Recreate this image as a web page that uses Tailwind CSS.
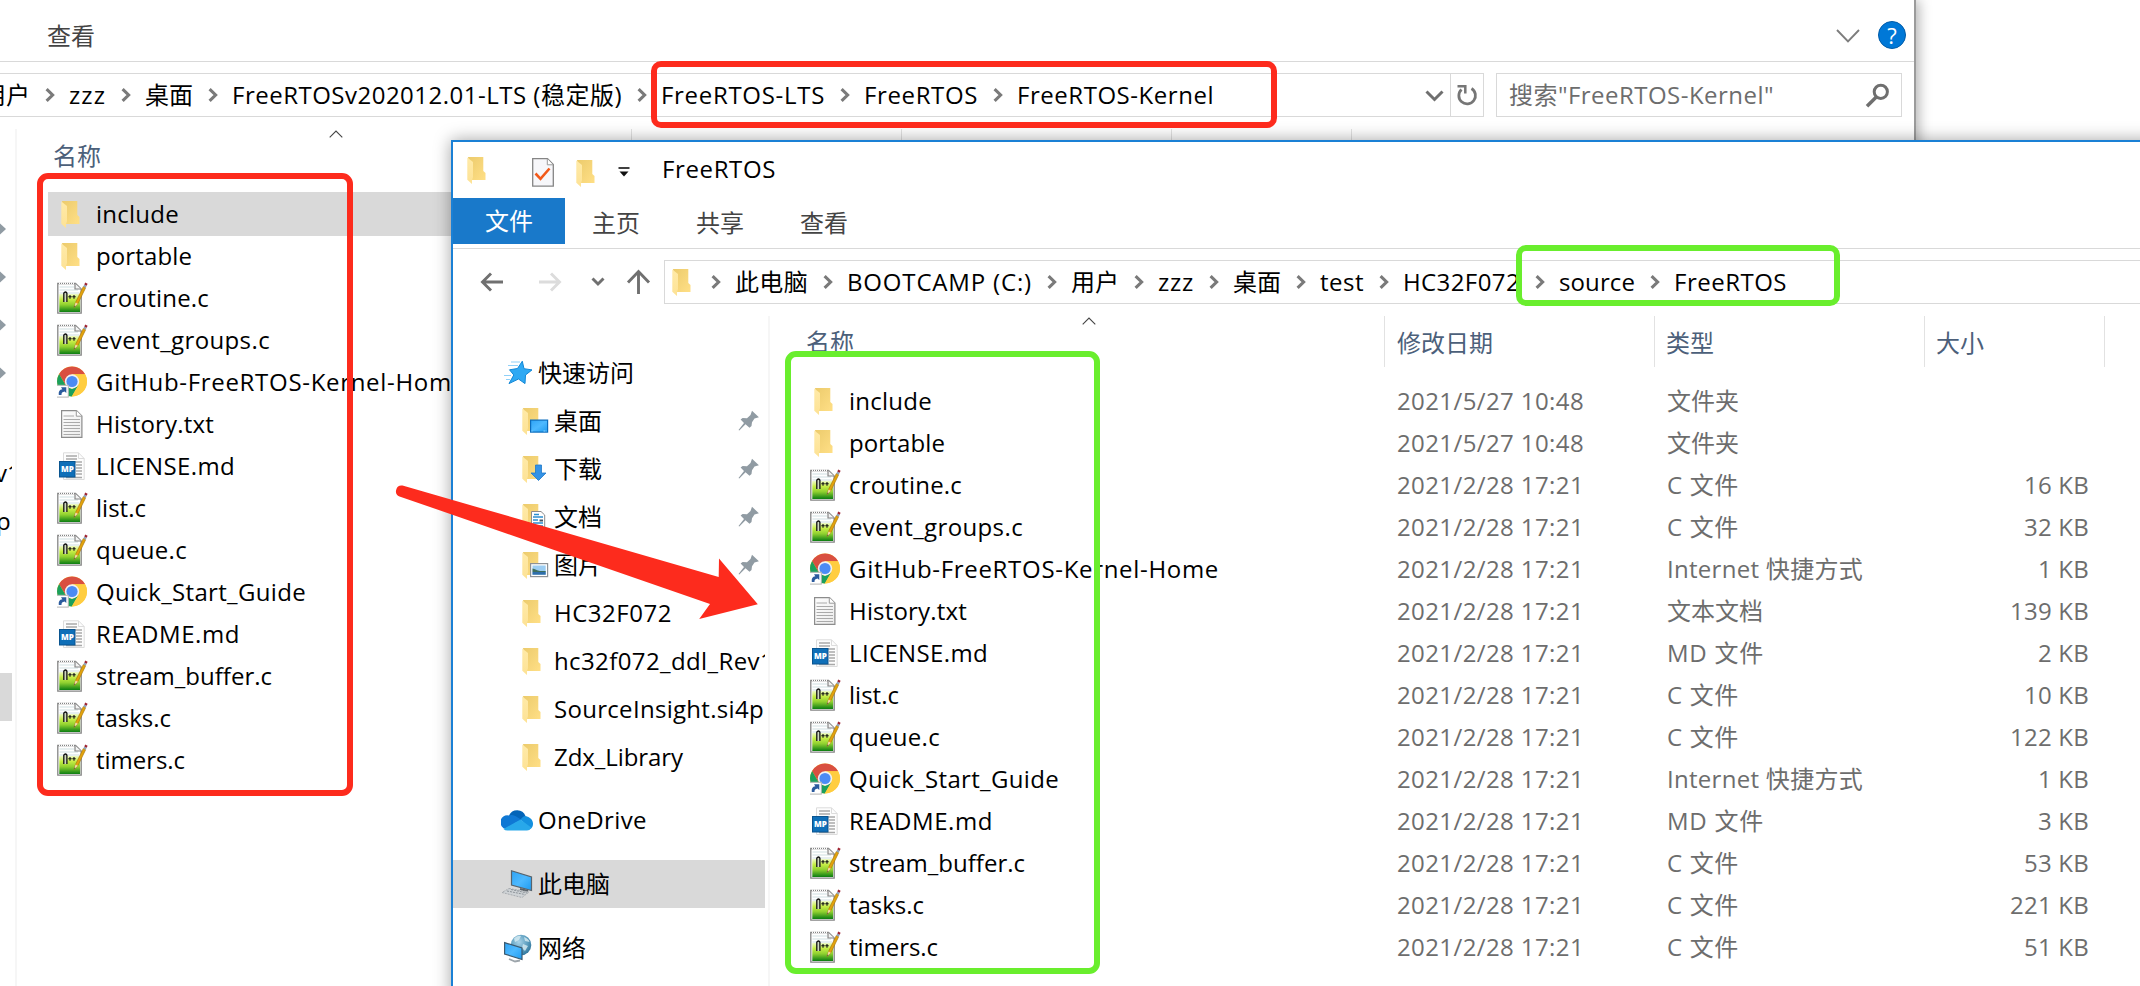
<!DOCTYPE html>
<html lang="zh-CN">
<head>
<meta charset="utf-8">
<title>FreeRTOS</title>
<script src="https://cdn.jsdelivr.net/npm/@tailwindcss/browser@4"></script>
</head>
<body class="relative h-[986px] w-[2140px] overflow-hidden bg-white font-['Open_Sans','Noto_Sans_CJK_SC',sans-serif] text-[24px] leading-[32px] text-black">

<!-- Icon library -->
<svg class="absolute h-0 w-0" aria-hidden="true">
  <defs>
    <linearGradient id="gFold" x1="0" x2="1" y1="0" y2="1"><stop offset="0" stop-color="#eccb6c"/><stop offset="1" stop-color="#ffdf86"/></linearGradient>
    <linearGradient id="gFlap" x1="0" x2="0" y1="0" y2="1"><stop offset="0" stop-color="#ffeaa8"/><stop offset="1" stop-color="#fde295"/></linearGradient>
    <linearGradient id="gNpp" x1="0" x2="0" y1="0" y2="1"><stop offset="0" stop-color="#eef9c8"/><stop offset=".3" stop-color="#c6ee45"/><stop offset=".6" stop-color="#8fd030"/><stop offset="1" stop-color="#0b7d12"/></linearGradient>
    <linearGradient id="gScr" x1="0" x2="1" y1="0" y2="1"><stop offset="0" stop-color="#2ea3f5"/><stop offset=".5" stop-color="#4db9ff"/><stop offset="1" stop-color="#1e9bf0"/></linearGradient>
    <linearGradient id="gPage" x1="0" x2="1" y1="0" y2="1"><stop offset="0" stop-color="#fdfdfd"/><stop offset="1" stop-color="#ececec"/></linearGradient>
    <radialGradient id="gGlobe" cx=".4" cy=".35" r=".7"><stop offset="0" stop-color="#a9d3e8"/><stop offset=".6" stop-color="#5c9ebf"/><stop offset="1" stop-color="#2f7399"/></radialGradient>
  </defs>
  <symbol id="folder" viewBox="0 -1 20 28">
    <path d="M1 0H16.300V14L18.500 16V23H5Z" fill="url(#gFold)"/>
    <path d="M.3 .5L6 5V20L5 23.500V27L.3 22.700Z" fill="url(#gFlap)"/>
  </symbol>
  <symbol id="npp" viewBox="0 0 31 32">
    <path d="M.8 1.500H18.500L24.200 7V31.200H.8Z" fill="#fff" stroke="#858585" stroke-width="1.300"/>
    <path d="M2 1.300H18" stroke="#fff" stroke-width="1.600" stroke-dasharray="1 1"/>
    <path d="M2.500 5H17M2.500 8H21M2.500 11H22" stroke="#cfdfe2" stroke-width="1.200"/>
    <rect x="2.300" y="12" width="20.800" height="18" fill="url(#gNpp)"/>
    <path d="M18 1.500V7H24" fill="#f3f3f3" stroke="#858585" stroke-width="1.200"/>
    <path d="M6.800 20V11.200Q8.300 8.800 9.900 11.200V20" fill="#cfd8c0" stroke="#111" stroke-width="1.300"/>
    <path d="M11.300 14.800H14.700M13 13V16.800M15.300 14.800H18.700M17 13V16.800" stroke="#111" stroke-width="1.100"/>
    <path d="M26.300 4.500L18.500 20.500L17 25.500L20.900 21.700L28.700 5.700Z" fill="#e2a30c" stroke="#a5720f" stroke-width=".6"/>
    <path d="M18.500 20.500L17 25.500L20.900 21.700Z" fill="#f0d9a8"/>
    <path d="M17.600 23.600L17 25.500L18.500 24Z" fill="#333"/>
    <path d="M26.300 4.500L27.300 2.600L29.700 3.700L28.700 5.700Z" fill="#8fa3b8"/>
    <path d="M27.300 2.600L28.200 .6L30.600 1.700L29.700 3.700Z" fill="#a02432"/>
  </symbol>
  <symbol id="chrome" viewBox="0 0 31 32">
    <circle cx="15" cy="15.500" r="15" fill="#ffcd40"/>
    <path d="M2.100 7.900A15 15 0 0 1 28 8L28.100 8.200H15L8.700 19.200Z" fill="#d94f41"/>
    <path d="M2.100 7.900L8.600 19.200L15 23L21.400 19L14.800 30.500A15 15 0 0 1 2.100 7.900Z" fill="#1ba05c"/>
    <path d="M15 8.200H28.100A15 15 0 0 1 14.800 30.500L21.400 19.200Z" fill="#ffcd40"/>
    <circle cx="15" cy="15.500" r="7.200" fill="#f1f1f1"/>
    <circle cx="15" cy="15.500" r="5.600" fill="#4b8bf4"/>
    <rect x="-.5" y="19.300" width="11.800" height="11.800" fill="#fff" stroke="#b5b5b5"/>
    <path d="M1.800 29C1.300 25.500 2.500 23.500 5.300 23.200L4 21.300H9.300V27L7.600 25.500C5.300 25.800 4.300 27 4.500 29Z" fill="#2b5b9e"/>
  </symbol>
  <symbol id="txt" viewBox="0 0 31 32">
    <path d="M4.600 2.600H19.500L24.900 8V29.400H4.600Z" fill="url(#gPage)" stroke="#8c8c8c" stroke-width="1.200"/>
    <path d="M19.300 2.600V8.200H24.900" fill="#fff" stroke="#9a9a9a"/>
    <path d="M6.500 8H17M6.500 11.500H23M6.500 14.500H23M6.500 17.500H23M6.500 20.500H23M6.500 23.500H23M6.500 26.500H23" stroke="#aaa"/>
  </symbol>
  <symbol id="md" viewBox="0 0 31 32">
    <path d="M6.500 2.800H21.500L27.200 8.500V29.500H6.500Z" fill="#fdfdfd" stroke="#dcdcdc"/>
    <path d="M21.500 2.800V8.500H27.200" fill="none" stroke="#dcdcdc"/>
    <path d="M9 6H20M9 9H20M12 12H25M19 15H25M19 18H25M19 21H25M19 24H25M9 27.500H25" stroke="#a9a9a9" stroke-width="1.300"/>
    <rect x="2.500" y="11.500" width="15.500" height="15.500" fill="#0f6fb8" stroke="#0a5590"/>
    <text x="10.300" y="22.300" text-anchor="middle" font-family="Open Sans, sans-serif" font-size="8" font-weight="800" letter-spacing="0" fill="#fff">MP</text>
  </symbol>
  <symbol id="chev" viewBox="0 0 10 14"><path d="M1.600 1.200L7.600 7L1.600 12.800" fill="none" stroke="#7a7a7a" stroke-width="3.100"/></symbol>
  <symbol id="sort" viewBox="0 0 14 8"><path d="M.7 7.300L7 1L13.300 7.300" fill="none" stroke="#444" stroke-width="1.100"/></symbol>
  <symbol id="pin" viewBox="0 0 22 22"><path d="M14 .8L20.900 7.200L16.500 8.500L14 12.300L13.500 16L11.500 17.800L7.500 14.200L1.300 20.500L.5 20L6 13L2.600 9.600L4.600 8L9 8.200L12.500 5Z" fill="#909ba3"/></symbol>
</svg>

<!-- Rear explorer window -->
<section class="absolute left-0 top-0 flex h-[986px] w-[1916px] flex-col border-r-2 border-[#9b9b9b] bg-white shadow-[3px_0_12px_rgba(0,0,0,0.3)]">
  <div class="flex h-[62px] shrink-0 items-center border-b border-[#d9d9d9] pl-[47px] pr-[8px] pt-[11px] text-[#444]">
    <span class="-mt-[1px]">查看</span>
    <svg class="ml-auto h-[14px] w-[24px]" viewBox="0 0 24 14"><path d="M1 1L12 12.300L23 1" fill="none" stroke="#7d7d7d" stroke-width="1.900"/></svg>
    <span class="-mt-[2px] ml-[18px] flex h-[28px] w-[28px] items-center justify-center rounded-full border border-[#005ba8] bg-[#0078d7] text-[22px] leading-[24px] text-white">?</span>
  </div>
  <div class="mt-[11px] flex h-[44px] shrink-0 items-stretch">
    <div class="flex w-[1484px] shrink-0 items-center border-y border-r border-[#d9d9d9]">
      <div id="crumbsA" class="-ml-[18px] flex items-center whitespace-nowrap"></div>
      <svg class="ml-auto mr-[6px] mt-[1px] h-[12px] w-[19px]" viewBox="0 0 19 12"><path d="M1.500 1.500L9.500 9.500L17.500 1.500" fill="none" stroke="#6f6f6f" stroke-width="3"/></svg>
      <div class="flex w-[33px] items-center justify-center self-stretch border-l border-[#d9d9d9]">
        <svg class="h-[23px] w-[22px]" viewBox="0 0 22 23"><path d="M15.500 4.500A8.300 8.300 0 1 1 5.500 5.500" fill="none" stroke="#767676" stroke-width="2.800"/><path d="M1.500 2.200H9.300V9.500" fill="none" stroke="#767676" stroke-width="2.500"/></svg>
      </div>
    </div>
    <div class="ml-[12px] flex w-[406px] items-center border border-[#d9d9d9] pl-[12px] pr-[11px] text-[#6d6d6d]">
      <span data-w="265" class="whitespace-nowrap">搜索"FreeRTOS-Kernel"</span>
      <svg class="ml-auto h-[25px] w-[25px]" viewBox="0 0 25 25"><circle cx="15.800" cy="8.800" r="6.600" fill="none" stroke="#6f6f6f" stroke-width="3"/><path d="M11.300 14L2 23.300" stroke="#6f6f6f" stroke-width="3.500"/></svg>
    </div>
  </div>
  <div class="flex grow pt-[12px]">
    <!-- Clipped end of the navigation column -->
    <div class="flex h-[857px] w-[12px] flex-col overflow-hidden pt-[76px]">
      <div class="flex h-[48px] shrink-0 items-end pb-[11px]"><svg class="h-[22px] w-[6px] shrink-0" viewBox="0 0 6 22"><path d="M0 3.500L6 9L0 14.500Z" fill="#909ba3"/></svg></div>
      <div class="flex h-[48px] shrink-0 items-end pb-[11px]"><svg class="h-[22px] w-[6px] shrink-0" viewBox="0 0 6 22"><path d="M0 3.500L6 9L0 14.500Z" fill="#909ba3"/></svg></div>
      <div class="flex h-[48px] shrink-0 items-end pb-[11px]"><svg class="h-[22px] w-[6px] shrink-0" viewBox="0 0 6 22"><path d="M0 3.500L6 9L0 14.500Z" fill="#909ba3"/></svg></div>
      <div class="flex h-[48px] shrink-0 items-end pb-[11px]"><svg class="h-[22px] w-[6px] shrink-0" viewBox="0 0 6 22"><path d="M0 3.500L6 9L0 14.500Z" fill="#909ba3"/></svg></div>
      <div class="h-[52px] shrink-0"></div>
      <div class="flex h-[48px] shrink-0 items-center"><span class="-ml-[5px]">v1</span></div>
      <div class="flex h-[48px] shrink-0 items-center"><span class="-ml-[4px]">pr</span></div>
      <div class="mt-[128px] h-[48px] shrink-0 bg-[#d9d9d9]"></div>
    </div>
    <div class="ml-[3px] w-[2px] bg-[#f6f6f6]"></div>
    <div class="flex w-[435px] flex-col">
      <div class="relative h-[63px] pl-[36px] pt-[11px] text-[#4c607a]">名称
        <svg class="absolute left-[312px] top-[1px] h-[8px] w-[14px]"><use href="#sort"/></svg>
      </div>
      <div id="filesA" class="ml-[31px] flex flex-col"></div>
    </div>
    <div class="ml-[179px] flex h-[51px]">
      <div class="w-[270px] border-l border-[#e2e2e2]"></div>
      <div class="w-[270px] border-l border-[#e2e2e2]"></div>
      <div class="w-[180px] border-l border-[#e2e2e2]"></div>
      <div class="w-[1px] bg-[#e2e2e2]"></div>
    </div>
  </div>
</section>

<!-- Front explorer window -->
<section class="absolute left-[451px] top-[140px] flex h-[860px] w-[1720px] flex-col border-2 border-[#1a80d5] bg-white shadow-[0_0_16px_rgba(0,0,0,0.36)]">
  <div class="flex h-[56px] shrink-0 items-center pl-[14px]">
    <svg class="h-[28px] w-[20px]"><use href="#folder"/></svg>
    <svg class="ml-[45px] mt-[4px] h-[29px] w-[22px]" viewBox="0 0 22 29"><path d="M.7 .7H15.500L21.300 6.500V28.200H.7Z" fill="#f7f7fa" stroke="#858585" stroke-width="1.300"/><path d="M15.300 .8V6.800H21" fill="#fff" stroke="#999"/><path d="M3.500 15.500L8.500 20.800L17.500 10.500" fill="none" stroke="#f2591a" stroke-width="2.600"/></svg>
    <svg class="ml-[22px] mt-[5px] h-[28px] w-[20px]"><use href="#folder"/></svg>
    <svg class="ml-[22px] mt-[3px] h-[10px] w-[12px]" viewBox="0 0 12 10"><path d="M.5 1H11.500" stroke="#111" stroke-width="1.600"/><path d="M1.500 4.500H10.500L6 9.500Z" fill="#111"/></svg>
    <span data-w="114" class="ml-[32px] -mt-[2px] whitespace-nowrap">FreeRTOS</span>
  </div>
  <div class="flex h-[51px] shrink-0 border-b border-[#d9d9d9] text-[#444]">
    <span class="flex h-[46px] w-[112px] items-center justify-center bg-[#1979ca] text-white">文件</span>
    <span class="ml-[27px] pt-[9px]">主页</span>
    <span class="ml-[56px] pt-[9px]">共享</span>
    <span class="ml-[56px] pt-[9px]">查看</span>
  </div>
  <div class="flex h-[67px] shrink-0 items-center pb-[1px] pl-[27px]">
    <svg class="h-[20px] w-[24px]" viewBox="0 0 24 20"><path d="M23 10H3M11 1.500L2.500 10L11 18.500" fill="none" stroke="#707070" stroke-width="2.900"/></svg>
    <svg class="ml-[34px] h-[20px] w-[24px]" viewBox="0 0 24 20"><path d="M1 10H21M13 1.500L21.500 10L13 18.500" fill="none" stroke="#dcdcdc" stroke-width="2.900"/></svg>
    <svg class="ml-[29px] h-[10px] w-[14px]" viewBox="0 0 14 10"><path d="M1.500 1.500L7 7L12.500 1.500" fill="none" stroke="#707070" stroke-width="2.900"/></svg>
    <svg class="ml-[21px] h-[26px] w-[25px]" viewBox="0 0 25 26"><path d="M12.500 25V3M2 13.500L12.500 2.500L23 13.500" fill="none" stroke="#707070" stroke-width="2.900"/></svg>
    <div class="ml-[13px] flex h-[44px] grow items-center border border-[#d9d9d9] pl-[7px]">
      <svg class="h-[28px] w-[20px] shrink-0"><use href="#folder"/></svg>
      <div id="crumbsB" class="ml-[4px] flex items-center whitespace-nowrap"></div>
    </div>
  </div>
  <div class="flex grow">
    <!-- Navigation column -->
    <nav class="flex w-[312px] shrink-0 flex-col overflow-hidden whitespace-nowrap pt-[33px]">
      <div class="flex h-[48px] shrink-0 items-center pl-[50px]">
        <svg class="h-[26px] w-[31px]" viewBox="0 0 31 26"><path d="M19.300 1.200L21 8.700L29 9.900L22.500 15L22 23.600L15.500 19L6 23.600L10.800 15L6.500 9.800L14.500 8.500Z" fill="#2fa9f3" stroke="#1287d6"/><path d="M8 2H17M5 5.500H15M1 15.500H8M3 19.500H7" stroke="#8fd0f8" stroke-width="1.200"/></svg>
        <span class="ml-[4px]">快速访问</span>
      </div>
      <div class="flex h-[48px] shrink-0 items-center pl-[69px] pr-[5px]">
        <svg class="h-[28px] w-[28px]" viewBox="0 0 28 28"><use href="#folder" width="20" height="28"/><rect x="8.600" y="13.100" width="17" height="12" fill="url(#gScr)" stroke="#0b6cbd" stroke-width="1.200"/><path d="M9.500 24H25" stroke="#8fd2ff" stroke-dasharray="1 11 2 1"/></svg>
        <span class="ml-[4px]">桌面</span><svg class="ml-auto h-[22px] w-[22px]"><use href="#pin"/></svg>
      </div>
      <div class="flex h-[48px] shrink-0 items-center pl-[69px] pr-[5px]">
        <svg class="h-[28px] w-[28px]" viewBox="0 0 28 28"><use href="#folder" width="20" height="28"/><path d="M13.500 10H19.500V18H24L16.500 25.500L9 18H13.500Z" fill="#3493e6" stroke="#1f78c8" stroke-width=".8"/></svg>
        <span class="ml-[4px]">下载</span><svg class="ml-auto h-[22px] w-[22px]"><use href="#pin"/></svg>
      </div>
      <div class="flex h-[48px] shrink-0 items-center pl-[69px] pr-[5px]">
        <svg class="h-[28px] w-[28px]" viewBox="0 0 28 28"><use href="#folder" width="20" height="28"/><path d="M9.500 8.500H19L22.700 12V26H9.500Z" fill="#fff" stroke="#8c8c8c"/><path d="M12 11.500H17M11 14H21M11 17H16M11 20H21M11 23H21" stroke="#2b8fd0" stroke-width="1.300"/><path d="M17.500 17.500H21" stroke="#456" stroke-width="2"/></svg>
        <span class="ml-[4px]">文档</span><svg class="ml-auto h-[22px] w-[22px]"><use href="#pin"/></svg>
      </div>
      <div class="flex h-[48px] shrink-0 items-center pl-[69px] pr-[5px]">
        <svg class="h-[28px] w-[28px]" viewBox="0 0 28 28"><use href="#folder" width="20" height="28"/><rect x="8.600" y="12.600" width="17" height="13" fill="#fff" stroke="#8e9296" stroke-width="1.200"/><rect x="10.500" y="14.500" width="13.200" height="9.200" fill="#9ccdf2"/><path d="M10.500 17.500C13 17.500 15 20 18 20H23.700V21H10.500Z" fill="#3f6f5d"/><path d="M10.500 21H23.700V23.700H10.500Z" fill="#2f6eaa"/></svg>
        <span class="ml-[4px]">图片</span><svg class="ml-auto h-[22px] w-[22px]"><use href="#pin"/></svg>
      </div>
      <div class="flex h-[48px] shrink-0 items-center pl-[69px]"><svg class="h-[28px] w-[20px] shrink-0"><use href="#folder"/></svg><span data-w="118" class="ml-[12px]">HC32F072</span></div>
      <div class="flex h-[48px] shrink-0 items-center pl-[69px]"><svg class="h-[28px] w-[20px] shrink-0"><use href="#folder"/></svg><span data-w="220" class="ml-[12px]">hc32f072_ddl_Rev1</span></div>
      <div class="flex h-[48px] shrink-0 items-center pl-[69px]"><svg class="h-[28px] w-[20px] shrink-0"><use href="#folder"/></svg><span data-w="220" class="ml-[12px]">SourceInsight.si4pr</span></div>
      <div class="flex h-[48px] shrink-0 items-center pl-[69px]"><svg class="h-[28px] w-[20px] shrink-0"><use href="#folder"/></svg><span data-w="129" class="ml-[12px]">Zdx_Library</span></div>
      <div class="mt-[15px] flex h-[48px] shrink-0 items-center pl-[48px]">
        <svg class="h-[22px] w-[32px]" viewBox="0 0 32 22"><path d="M8 6.500A9 9 0 0 1 24.500 7L18 14Z" fill="#0364b8"/><path d="M5 20A6.700 6.700 0 0 1 7.500 6.500C11.500 5 14 6.500 16 8L20 10.500L5.500 19.800Z" fill="#0f78d4"/><path d="M19.500 10.500C22 7 25 6.300 26 7.500C33 9.500 33.500 17 29.500 20Z" fill="#1490df"/><path d="M19.500 10.500L30.500 18.800Q29 21.500 26 21.500H6.500Q4 21.500 2.500 20Z" fill="#28a8ea"/></svg>
        <span data-w="109" class="ml-[5px]">OneDrive</span>
      </div>
      <div class="mt-[16px] flex h-[48px] shrink-0 items-center bg-[#d9d9d9] pl-[48px]">
        <svg class="h-[28px] w-[32px]" viewBox="0 0 32 28"><path d="M10.500 .8L30.500 7V20.500L10.500 15Z" fill="url(#gScr)" stroke="#57636d" stroke-width="1.200"/><path d="M19 19L27 21" stroke="#5b6268" stroke-width="2"/><path d="M8 18.500L28 22L21 27.500L1 22.500Z" fill="#cfd3d6" stroke="#9aa0a5" stroke-width=".8" stroke-dasharray="2 1"/><path d="M6 21L24 24.500M10 19.500L26 23" stroke="#8b9298" stroke-dasharray="2 1"/></svg>
        <span class="ml-[5px]">此电脑</span>
      </div>
      <div class="mt-[16px] flex h-[48px] shrink-0 items-center pl-[50px]">
        <svg class="h-[30px] w-[30px]" viewBox="0 0 30 30"><circle cx="18" cy="12" r="10.300" fill="url(#gGlobe)"/><path d="M11 5.500Q14 2 18 3L16 7L12 9ZM21 4Q26 6 26.500 9L22 8ZM20 11L25 13L22 18L19 15Z" fill="#d8ecf2" fill-opacity=".8"/><path d="M1.600 9.600L19 15V26.500L1.600 21Z" fill="url(#gScr)" stroke="#3b5a70" stroke-width="1.200"/><path d="M6 26L12 28.500L17 27.500" fill="none" stroke="#9da5ab" stroke-width="1.800"/></svg>
        <span class="ml-[5px]">网络</span>
      </div>
    </nav>
    <div class="ml-[3px] w-[2px] shrink-0 bg-[#f6f6f6]"></div>
    <!-- File table -->
    <div class="flex grow flex-col">
      <div class="flex h-[64px] shrink-0 text-[#4c607a]">
        <div class="relative w-[614px] pl-[36px] pt-[10px]">名称
          <svg class="absolute left-[312px] top-[1px] h-[8px] w-[14px]"><use href="#sort"/></svg>
        </div>
        <div class="h-[51px] w-[270px] border-l border-[#e2e2e2] pl-[12px] pt-[11px]">修改日期</div>
        <div class="h-[51px] w-[270px] border-l border-[#e2e2e2] pl-[11px] pt-[11px]">类型</div>
        <div class="h-[51px] w-[180px] border-l border-[#e2e2e2] pl-[11px] pt-[11px]">大小</div>
        <div class="h-[51px] w-[1px] bg-[#e2e2e2]"></div>
      </div>
      <div id="filesB" class="ml-[40px] flex flex-col"></div>
    </div>
  </div>
</section>

<!-- Annotations -->
<div class="absolute left-[651px] top-[61px] h-[67px] w-[626px] rounded-[10px] border-[6px] border-[#fd2b1d]"></div>
<div class="absolute left-[37px] top-[173px] h-[623px] w-[316px] rounded-[11px] border-[6px] border-[#fd2b1d]"></div>
<div class="absolute left-[1516px] top-[245px] h-[61px] w-[324px] rounded-[10px] border-[6px] border-[#69ee2d]"></div>
<div class="absolute left-[785px] top-[351px] h-[623px] w-[315px] rounded-[11px] border-[6px] border-[#69ee2d]"></div>
<svg class="absolute left-0 top-0 h-[986px] w-[2140px]" viewBox="0 0 2140 986"><path d="M402.500 485.500L718.700 577L719 558.500L757.800 604.300L699.200 619L710 604L399.500 496.400A5.700 5.700 0 0 1 402.500 485.500Z" fill="#fd2b1d"/></svg>

<script>
const files = [
  ['folder','include',83,'2021/5/27 10:48','文件夹',72,'',0],
  ['folder','portable',96,'2021/5/27 10:48','文件夹',72,'',0],
  ['npp','croutine.c',113,'2021/2/28 17:21','C 文件',72,'16 KB',65],
  ['npp','event_groups.c',174,'2021/2/28 17:21','C 文件',72,'32 KB',65],
  ['chrome','GitHub-FreeRTOS-Kernel-Home',370,'2021/2/28 17:21','Internet 快捷方式',196,'1 KB',51],
  ['txt','History.txt',118,'2021/2/28 17:21','文本文档',96,'139 KB',79],
  ['md','LICENSE.md',139,'2021/2/28 17:21','MD 文件',97,'2 KB',51],
  ['npp','list.c',50,'2021/2/28 17:21','C 文件',72,'10 KB',65],
  ['npp','queue.c',91,'2021/2/28 17:21','C 文件',72,'122 KB',79],
  ['chrome','Quick_Start_Guide',210,'2021/2/28 17:21','Internet 快捷方式',196,'1 KB',51],
  ['md','README.md',144,'2021/2/28 17:21','MD 文件',97,'3 KB',51],
  ['npp','stream_buffer.c',176,'2021/2/28 17:21','C 文件',72,'53 KB',65],
  ['npp','tasks.c',75,'2021/2/28 17:21','C 文件',72,'221 KB',79],
  ['npp','timers.c',89,'2021/2/28 17:21','C 文件',72,'51 KB',65],
];
const icon = k => k === 'folder'
  ? '<svg class="ml-[4px] mr-[7px] h-[28px] w-[20px] shrink-0"><use href="#folder"/></svg>'
  : `<svg class="h-[32px] w-[31px] shrink-0 overflow-visible"><use href="#${k}"/></svg>`;
document.getElementById('filesA').innerHTML = files.map((f, i) =>
  `<div class="flex ${i ? 'h-[42px]' : 'h-[44px] -mb-[1px] bg-[#d9d9d9]'} items-center overflow-hidden whitespace-nowrap pl-[9px]">${icon(f[0])}<span data-w="${f[2]}" class="ml-[8px]">${f[1]}</span></div>`).join('');
document.getElementById('filesB').innerHTML = files.map(f =>
  `<div class="flex h-[42px] items-center whitespace-nowrap">${icon(f[0])}<div class="w-[556px] pl-[8px]"><span data-w="${f[2]}">${f[1]}</span></div><div class="w-[270px] text-[#6d6d6d]"><span data-w="187">${f[3]}</span></div><div class="w-[270px] text-[#6d6d6d]"><span data-w="${f[5]}">${f[4]}</span></div><div class="w-[152px] text-right text-[#6d6d6d]"><span data-w="${f[7]}">${f[6]}</span></div></div>`).join('');
const chev = '<svg class="ml-[15px] mr-[14px] h-[14px] w-[10px] shrink-0"><use href="#chev"/></svg>';
const crumb = ([t, w]) => `<span data-w="${w}" class="shrink-0">${t}</span>`;
document.getElementById('crumbsA').innerHTML = [['用户',48],['zzz',37],['桌面',48],['FreeRTOSv202012.01-LTS (稳定版)',390],['FreeRTOS-LTS',164],['FreeRTOS',114],['FreeRTOS-Kernel',197]].map(crumb).join(chev);
document.getElementById('crumbsB').innerHTML = chev + [['此电脑',73],['BOOTCAMP (C:)',185],['用户',48],['zzz',36],['桌面',48],['test',44],['HC32F072',117],['source',76],['FreeRTOS',113]].map(crumb).join(chev);
// Track every label so that it spans the width given in data-w
const pen = document.createElement('canvas').getContext('2d');
pen.font = '24px "Open Sans", "Noto Sans CJK SC", sans-serif';
for (const el of document.querySelectorAll('[data-w]')) {
  const n = el.textContent.length, w = +el.dataset.w;
  if (!n || !w) continue;
  el.style.letterSpacing = ((w - pen.measureText(el.textContent).width) / n).toFixed(3) + 'px';
}
</script>
</body>
</html>
